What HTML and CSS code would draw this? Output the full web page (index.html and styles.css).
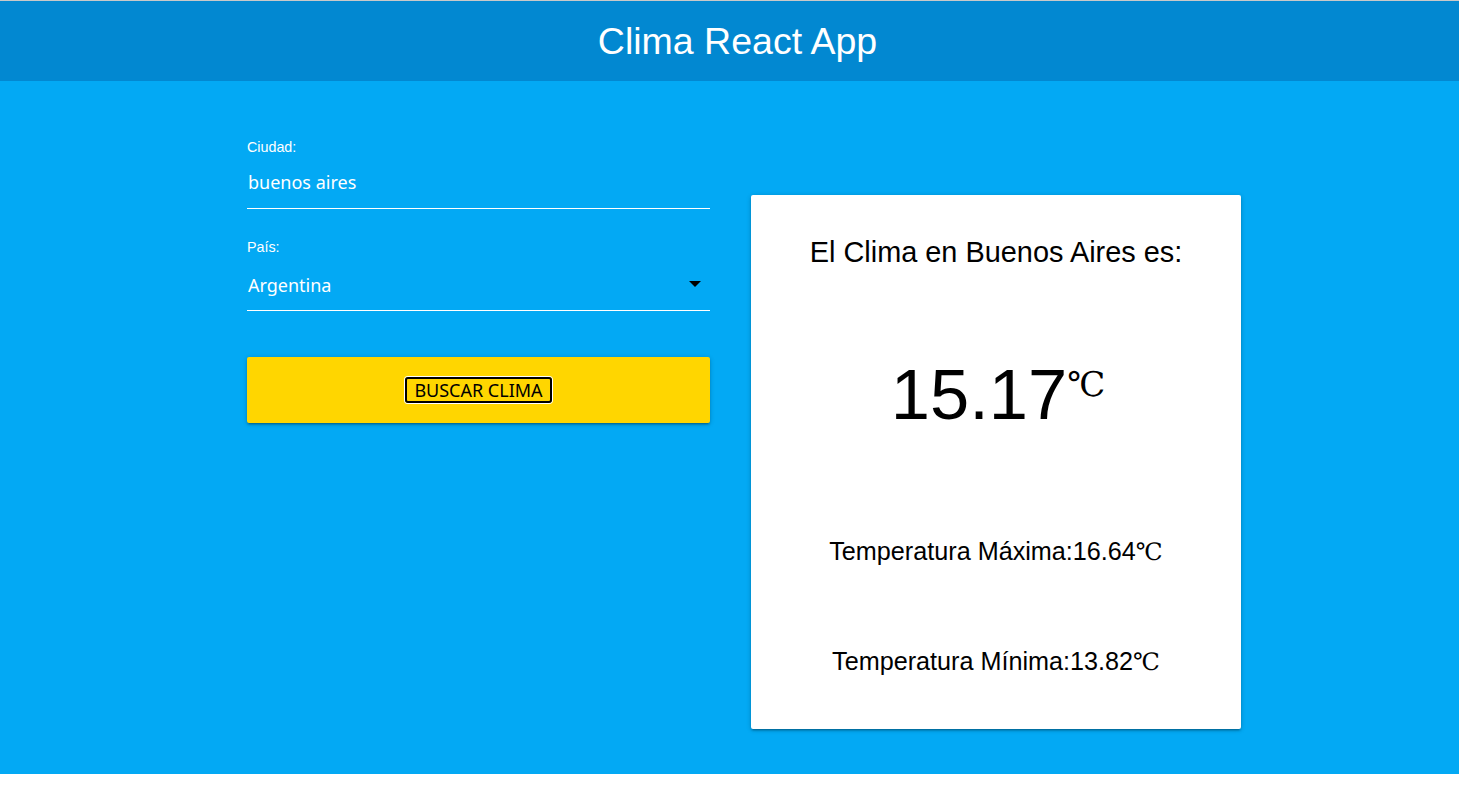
FILE: index.html
```html
<!DOCTYPE html>
<html lang="es">
<head>
<meta charset="utf-8">
<title>Clima React App</title>
<link rel="stylesheet" href="styles.css">
</head>
<body>
<header class="topbar">
  <h1 class="brand">Clima React App</h1>
</header>
<main class="main">
  <form class="form">
    <label class="label">Ciudad:</label>
    <div class="field field-input"><span class="value">buenos aires</span></div>
    <label class="label label-second">País:</label>
    <div class="field field-select">
      <span class="value">Argentina</span>
      <span class="caret"></span>
    </div>
    <div class="button"><span class="button-text">BUSCAR CLIMA</span></div>
  </form>
  <section class="card">
    <h2 class="card-title">El Clima en Buenos Aires es:</h2>
    <p class="temp">15.17<span class="temp-unit">℃</span></p>
    <p class="range range-max">Temperatura Máxima:16.64<span class="unit">℃</span></p>
    <p class="range range-min">Temperatura Mínima:13.82<span class="unit">℃</span></p>
  </section>
</main>
</body>
</html>
```
FILE: styles.css
```css
html, body {
  margin: 0;
  padding: 0;
  background: #ffffff;
  font-family: "Liberation Sans", Arial, sans-serif;
}

.topbar {
  border-top: 1px solid #c9c9c9;
  background: #0288d1;
  height: 80px;
  display: flex;
  align-items: center;
  justify-content: center;
  padding-left: 16px;
}

.brand {
  margin: 0;
  color: #ffffff;
  font-family: "Liberation Sans", Arial, sans-serif;
  font-weight: 400;
  font-size: 37.5px;
  line-height: 43px;
}

.main {
  background: #03a9f4;
  height: 693px;
  display: flex;
  align-items: flex-start;
  gap: 41px;
  padding-left: 247px;
  box-sizing: border-box;
}

.form {
  width: 463px;
  margin-top: 58px;
  display: flex;
  flex-direction: column;
}

.label {
  display: block;
  color: #ffffff;
  font-family: "Liberation Sans", Arial, sans-serif;
  font-size: 14.3px;
  line-height: 17px;
}

.label-second {
  margin-top: 30px;
}

.field {
  border-bottom: 1px solid #ffffff;
  color: #ffffff;
  font-family: "Noto Sans", "Open Sans", sans-serif;
  font-size: 18px;
  line-height: 24px;
  box-sizing: border-box;
  display: flex;
  align-items: flex-start;
  justify-content: space-between;
  padding-left: 1px;
}

.field-input {
  height: 53px;
  padding-top: 14px;
}

.field-select {
  height: 55px;
  padding-top: 17px;
}

.caret {
  width: 0;
  height: 0;
  border-left: 6px solid transparent;
  border-right: 6px solid transparent;
  border-top: 6px solid #000000;
  margin-top: 8px;
  margin-right: 9px;
}

.button {
  margin-top: 46px;
  height: 66px;
  background: #ffd600;
  border-radius: 2px;
  box-shadow: 0 2px 2px 0 rgba(0,0,0,0.14), 0 3px 1px -2px rgba(0,0,0,0.12), 0 1px 5px 0 rgba(0,0,0,0.2);
  display: flex;
  align-items: center;
  justify-content: center;
}

.button-text {
  font-family: "Noto Sans", "Open Sans", sans-serif;
  font-size: 18px;
  line-height: 22px;
  color: #000000;
  border: 2px solid #000000;
  border-radius: 3px;
  box-shadow: 0 0 0 1px #ffffff;
  padding: 0 7px;
}

.card {
  margin-top: 114px;
  width: 490px;
  background: #ffffff;
  border-radius: 2px;
  box-shadow: 0 2px 2px 0 rgba(0,0,0,0.14), 0 3px 1px -2px rgba(0,0,0,0.12), 0 1px 5px 0 rgba(0,0,0,0.2);
  padding: 40px 0 52px;
  text-align: center;
  color: #000000;
}

.card-title {
  margin: 0;
  font-weight: 400;
  font-size: 28.9px;
  line-height: 34px;
}

.temp {
  margin: 90px 0 0;
  padding-left: 4px;
  font-size: 70.5px;
  line-height: 72px;
}

.temp-unit {
  font-family: "Liberation Serif", "DejaVu Serif", serif;
  font-size: 34px;
  line-height: 0;
  vertical-align: 23px;
}

.range {
  margin: 0;
  font-size: 25.2px;
  line-height: 30px;
}

.range-max {
  margin-top: 105px;
}

.range-min {
  margin-top: 79px;
}

.unit {
  font-family: "Liberation Serif", "DejaVu Serif", serif;
  font-size: 24px;
}
```
